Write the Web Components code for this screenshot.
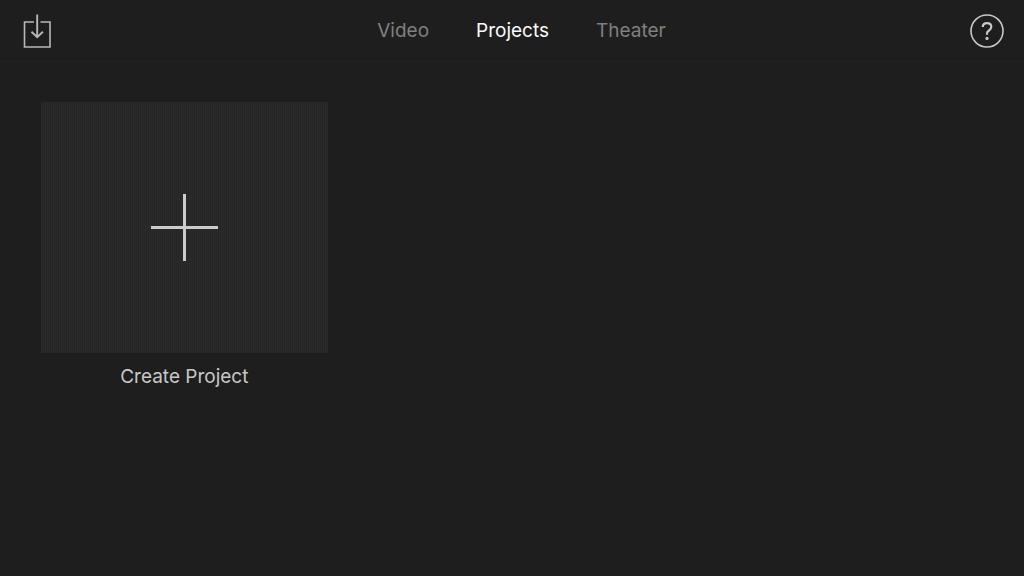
<!DOCTYPE html>
<html lang="en">
<head>
<meta charset="utf-8">
<meta name="viewport" content="width=device-width, initial-scale=1">
<title>Projects</title>
<style>
  body {
    margin: 0;
    min-height: 100vh;
    background-color: #1e1e1e;
    color: #c8c8c8;
    font-family: Inter, "Liberation Sans", sans-serif;
    font-size: 19px;
    line-height: 24px;
  }
</style>
</head>
<body>
<project-browser></project-browser>

<script>
/**
 * Plain icon button, the icon is slotted.
 * @extends HTMLElement
 */
class IconButton extends HTMLElement {
  constructor() {
    super()
    this.attachShadow({ mode: 'open' })
    this.shadowRoot.innerHTML = `
      <style>
        :host {
          display: block;
        }
        button {
          display: block;
          padding: 0;
          border: 0;
          background: none;
          color: inherit;
          cursor: pointer;
        }
        ::slotted(svg) {
          display: block;
        }
      </style>
      <button type="button" aria-label="${this.getAttribute('label')}">
        <slot></slot>
      </button>
    `
  }
}

/**
 * A link of the top navigation.
 * @extends HTMLElement
 */
class NavTab extends HTMLElement {
  constructor() {
    super()
    this.attachShadow({ mode: 'open' })
    const current = this.hasAttribute('current') ? 'aria-current="page"' : ''
    this.shadowRoot.innerHTML = `
      <style>
        :host {
          display: block;
        }
        a {
          color: #808080;
          text-decoration: none;
        }
        a[aria-current] {
          color: #fafafa;
        }
      </style>
      <a href="#${this.getAttribute('target')}" ${current}><slot></slot></a>
    `
  }
}

/**
 * The header bar: import button, tabs and help button.
 * @extends HTMLElement
 */
class TopBar extends HTMLElement {
  constructor() {
    super()
    this.attachShadow({ mode: 'open' })
    this.shadowRoot.innerHTML = `
      <style>
        :host {
          display: block;
        }
        header {
          display: grid;
          grid-template-columns: 1fr auto 1fr;
          align-items: center;
          padding: 13px 20px 13px 23px;
          border-bottom: 1px solid #222222;
        }
        nav {
          display: flex;
          gap: 47px;
          padding: 1px 0 0 16px;
        }
        icon-button {
          justify-self: start;
        }
        icon-button:last-child {
          justify-self: end;
        }
      </style>
      <header>
        <icon-button label="Import">
          <svg width="28" height="35" viewBox="0 0 28 35" fill="none" stroke="#b8b8b8" stroke-width="1.6" aria-hidden="true">
            <path d="M11 9H1.5V34H27V9H17.5"/>
            <path d="M14.2 1.4V24.2M8.5 18.8L14.2 24.3L19.9 18.8" stroke-width="1.9"/>
          </svg>
        </icon-button>
        <nav>
          <nav-tab target="video">Video</nav-tab>
          <nav-tab target="projects" current>Projects</nav-tab>
          <nav-tab target="theater">Theater</nav-tab>
        </nav>
        <icon-button label="Help">
          <svg width="34" height="34" viewBox="0 0 34 34" fill="none" stroke="#c8c8c8" aria-hidden="true">
            <circle cx="17" cy="17" r="16" stroke-width="1.6"/>
            <path d="M12.8 13C12.8 10.6 14.5 9.2 17 9.2C19.5 9.2 21.3 10.6 21.3 12.8C21.3 14.6 20.4 15.5 19 16.5C17.5 17.5 17 18.2 17 19.5V20.8" stroke-width="2.2"/>
            <circle cx="17" cy="24.4" r="1.6" fill="#c8c8c8" stroke="none"/>
          </svg>
        </icon-button>
      </header>
    `
  }
}

/**
 * Tile that starts a new project, with its caption below.
 * @extends HTMLElement
 */
class CreateTile extends HTMLElement {
  constructor() {
    super()
    this.attachShadow({ mode: 'open' })
    this.shadowRoot.innerHTML = `
      <style>
        :host {
          display: block;
        }
        button {
          display: flex;
          flex-direction: column;
          gap: 12px;
          width: 100%;
          padding: 0;
          border: 0;
          background: none;
          color: inherit;
          font: inherit;
          cursor: pointer;
        }
        .tile {
          display: grid;
          place-items: center;
          width: 100%;
          aspect-ratio: 8 / 7;
          background: repeating-linear-gradient(90deg, #2a2a2a 0 1px, #262626 1px 2px);
        }
        .caption {
          align-self: center;
        }
      </style>
      <button type="button">
        <span class="tile">
          <svg width="67" height="67" viewBox="0 0 67 67" stroke="#cccccc" stroke-width="3" aria-hidden="true">
            <path d="M33.5 0V67M0 33.5H67"/>
          </svg>
        </span>
        <span class="caption"><slot></slot></span>
      </button>
    `
  }
}

/**
 * The whole screen.
 * @extends HTMLElement
 */
class ProjectBrowser extends HTMLElement {
  constructor() {
    super()
    this.attachShadow({ mode: 'open' })
    this.shadowRoot.innerHTML = `
      <style>
        :host {
          display: block;
        }
        main {
          display: grid;
          grid-template-columns: repeat(auto-fill, minmax(280px, 1fr));
          gap: 41px;
          padding: 40px 41px;
        }
      </style>
      <top-bar></top-bar>
      <main>
        <create-tile>Create Project</create-tile>
      </main>
    `
  }
}

customElements.define('icon-button', IconButton)
customElements.define('nav-tab', NavTab)
customElements.define('top-bar', TopBar)
customElements.define('create-tile', CreateTile)
customElements.define('project-browser', ProjectBrowser)
</script>
</body>
</html>
